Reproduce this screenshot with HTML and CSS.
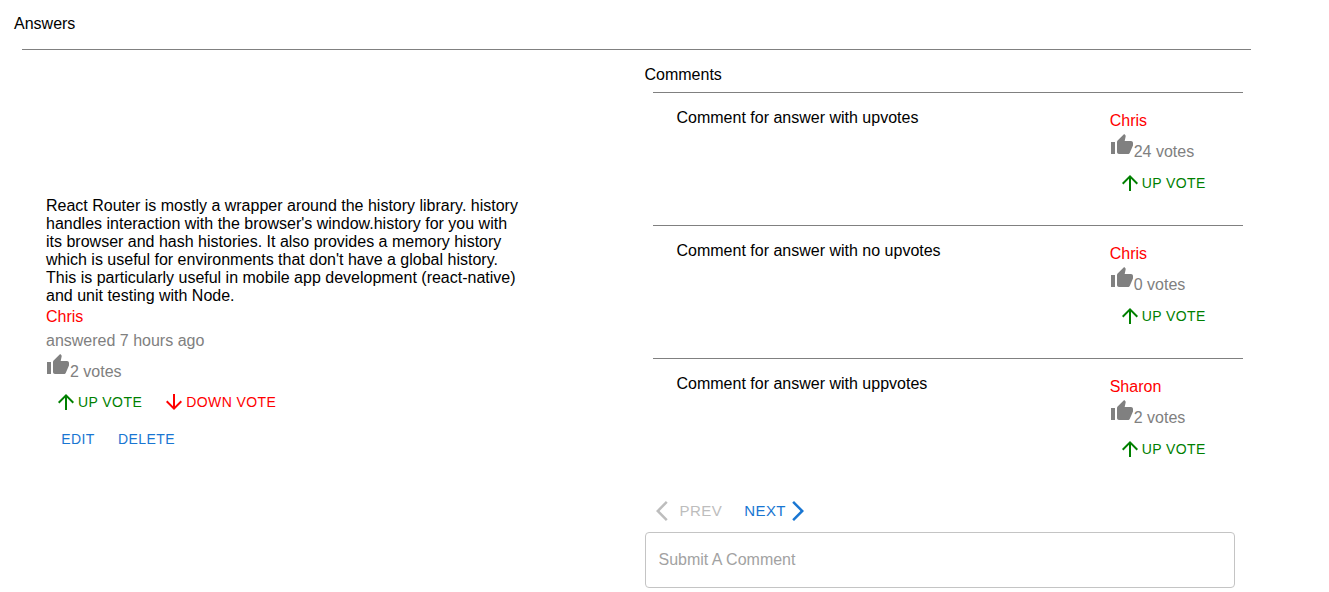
FILE: index.html
```html
<!DOCTYPE html>
<html lang="en">
<head>
<meta charset="utf-8">
<title>Answers</title>
<link rel="stylesheet" href="styles.css">
</head>
<body>
<svg class="sprite" aria-hidden="true">
  <symbol id="thumb" viewBox="0 0 24 24"><path d="M1 21h4V9H1v12zm22-11c0-1.1-.9-2-2-2h-6.310l.95-4.570.03-.32c0-.41-.17-.79-.44-1.060L14.170 1 7.590 7.590C7.220 7.950 7 8.450 7 9v10c0 1.100.9 2 2 2h9c.83 0 1.540-.5 1.840-1.220l3.020-7.050c.09-.23.14-.47.14-.73v-2z"/></symbol>
  <symbol id="up" viewBox="0 0 24 24"><path d="M4 12l1.410 1.410L11 7.830V20h2V7.830l5.580 5.590L20 12l-8-8-8 8z"/></symbol>
  <symbol id="down" viewBox="0 0 24 24"><path d="M20 12l-1.410-1.410L13 16.170V4h-2v12.170l-5.580-5.590L4 12l8 8 8-8z"/></symbol>
  <symbol id="back" viewBox="0 0 24 24"><path d="M11.670 3.870L9.900 2.100 0 12l9.900 9.900 1.770-1.770L3.540 12z"/></symbol>
  <symbol id="forward" viewBox="0 0 24 24"><path d="M6.230 20.230L8 22l10-10L8 2 6.230 3.770 14.460 12z"/></symbol>
</svg>
<main class="page">
  <h2 class="heading">Answers</h2>
  <section class="answer-row">
    <article class="answer">
      <p class="answer-text">React Router is mostly a wrapper around the history library. history handles interaction with the browser's window.history for you with its browser and hash histories. It also provides a memory history which is useful for environments that don't have a global history. This is particularly useful in mobile app development (react-native) and unit testing with Node.</p>
      <div class="author">Chris</div>
      <div class="meta">answered 7 hours ago</div>
      <div class="meta"><svg class="icon"><use href="#thumb"/></svg>2 votes</div>
      <div class="actions votes">
        <button class="btn green" type="button"><svg class="icon"><use href="#up"/></svg>UP VOTE</button>
        <button class="btn red" type="button"><svg class="icon"><use href="#down"/></svg>DOWN VOTE</button>
      </div>
      <div class="actions">
        <button class="btn" type="button">EDIT</button>
        <button class="btn" type="button">DELETE</button>
      </div>
    </article>
    <section class="comments">
      <h3 class="heading">Comments</h3>
      <ul class="comment-list">
        <li class="comment">
          <p>Comment for answer with upvotes</p>
          <div>
            <div class="author">Chris</div>
            <div class="meta"><svg class="icon"><use href="#thumb"/></svg>24 votes</div>
            <div class="actions"><button class="btn green" type="button"><svg class="icon"><use href="#up"/></svg>UP VOTE</button></div>
          </div>
        </li>
        <li class="comment">
          <p>Comment for answer with no upvotes</p>
          <div>
            <div class="author">Chris</div>
            <div class="meta"><svg class="icon"><use href="#thumb"/></svg>0 votes</div>
            <div class="actions"><button class="btn green" type="button"><svg class="icon"><use href="#up"/></svg>UP VOTE</button></div>
          </div>
        </li>
        <li class="comment">
          <p>Comment for answer with uppvotes</p>
          <div>
            <div class="author">Sharon</div>
            <div class="meta"><svg class="icon"><use href="#thumb"/></svg>2 votes</div>
            <div class="actions"><button class="btn green" type="button"><svg class="icon"><use href="#up"/></svg>UP VOTE</button></div>
          </div>
        </li>
      </ul>
      <nav class="actions" aria-label="Comment pages">
        <button class="btn large" type="button" disabled><svg class="icon"><use href="#back"/></svg>PREV</button>
        <button class="btn large" type="button">NEXT<svg class="icon"><use href="#forward"/></svg></button>
      </nav>
      <input class="comment-input" type="text" placeholder="Submit A Comment" aria-label="Submit A Comment">
    </section>
  </section>
</main>
</body>
</html>
```
FILE: styles.css
```css
* {
  box-sizing: border-box;
}

body {
  margin: 0;
  background: #fff;
  color: #000;
  font: 16px/18px "Liberation Sans", Arial, sans-serif;
}

p,
ul {
  margin: 0;
  padding: 0;
}

.sprite {
  position: absolute;
  width: 0;
  height: 0;
}

.page {
  padding: 15px 78px 0 14px;
}

.heading {
  margin: 0;
  font-size: 16px;
  font-weight: 400;
}

.answer-row {
  display: grid;
  grid-template-columns: 1fr 1fr;
  align-items: center;
  margin: 16px 0 0 8px;
  border-top: 1px solid #808080;
}

.answer {
  padding: 12px 112px 0 24px;
}

.author,
.meta {
  line-height: 24px;
}

.author {
  color: #f00;
}

.meta {
  color: #808080;
}

.icon {
  width: 24px;
  height: 24px;
  fill: currentColor;
}

.actions {
  display: flex;
}

.votes {
  gap: 4px;
}

.btn {
  display: inline-flex;
  align-items: center;
  justify-content: center;
  min-width: 64px;
  height: 37px;
  padding: 0 8px;
  border: 0;
  background: none;
  color: #1976d2;
  font: 14px/24px "Liberation Sans", Arial, sans-serif;
  letter-spacing: 0.03em;
  white-space: nowrap;
  cursor: pointer;
}

.btn.green {
  color: #008000;
}

.btn.red {
  color: #f00;
}

.btn.large {
  height: 42px;
  padding: 0 11px;
  font-size: 15px;
}

.btn:disabled {
  color: #bdbdbd;
  cursor: default;
}

.comments {
  padding: 16px 8px 4px;
}

.comment-list {
  margin: 8px 0 0 8px;
  list-style: none;
}

.comment {
  display: grid;
  grid-template-columns: 4fr 1fr;
  padding: 16px 25px 24px 24px;
  border-top: 1px solid #808080;
}

.comment:last-child {
  padding-bottom: 23px;
}

.comment-input {
  display: block;
  width: calc(100% - 8px);
  height: 56px;
  padding: 0 13px;
  border: 1px solid #c4c4c4;
  border-radius: 4px;
  background: #fff;
  font: inherit;
}

.comment-input::placeholder {
  color: #a2a2a2;
  opacity: 1;
}
```
